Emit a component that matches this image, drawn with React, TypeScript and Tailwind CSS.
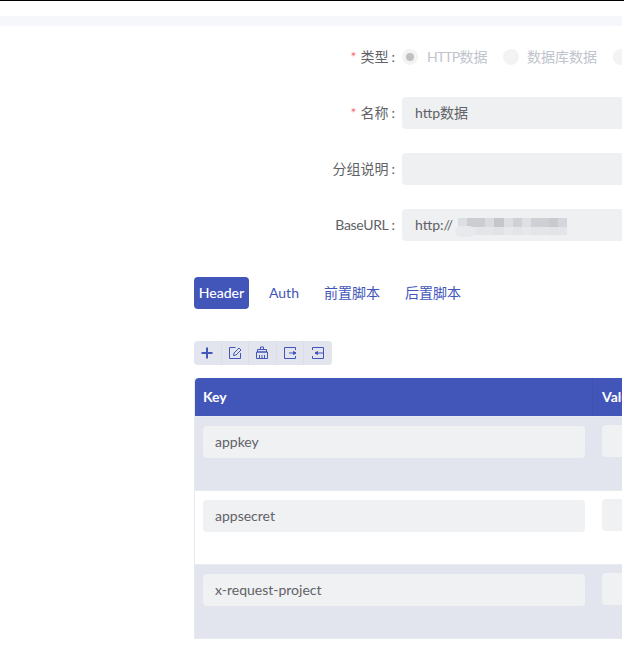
import React from "react";

const font = { fontFamily: "Lato, 'Noto Sans CJK SC', sans-serif" };

const mosaicTop = ["#dcdee2", "#cccdd1", "#cccdd1", "#dadbdf", "#c5c6ca", "#dcdee2", "#cfd1d5", "#dfe0e3", "#cfd0d5", "#cfd0d5", "#c8cacd", "#d3d6da"];
const mosaicBottom = ["#eaebee", "#e6e7ea", "#e3e5e8", "#e3e5e8", "#e0e2e5", "#e6e8ea", "#e3e5e8", "#e6e8ea", "#e3e5e8", "#e3e5e8", "#e1e3e6", "#e3e5e8"];

function FormRow({ label, required, children }: { label: React.ReactNode; required?: boolean; children: React.ReactNode }) {
  return (
    <div className="flex h-8 items-center">
      <div className="w-[402px] shrink-0 pr-[7px] text-right text-sm text-[#606266]">
        {required && <span className="mr-1 text-[#f56c6c]">*</span>}
        {label}
        <span className="ml-[3px]">:</span>
      </div>
      {children}
    </div>
  );
}

function Radio({ label, checked, width }: { label?: React.ReactNode; checked?: boolean; width: string }) {
  return (
    <div className={`flex items-center ${width}`}>
      <span className="flex h-4 w-4 shrink-0 items-center justify-center rounded-full bg-[#f3f3f3]">
        {checked && <span className="h-2 w-2 rounded-full bg-[#c0c0c0]"></span>}
      </span>
      {label && <span className="ml-[8px] text-sm text-[#c0c4cc]">{label}</span>}
    </div>
  );
}

function ToolIcon({ children, last }: { children: React.ReactNode; last?: boolean }) {
  return (
    <div className={`flex h-6 w-[27.6px] items-center justify-center ${last ? "" : "border-r border-[#dcdfea]"}`}>
      <svg width="14" height="14" viewBox="0 0 14 14" fill="none" stroke="#4255b8" strokeWidth="1">
        {children}
      </svg>
    </div>
  );
}

function TableRow({ name, striped }: { name: string; striped?: boolean }) {
  return (
    <div className={`flex h-[74px] border-t ${striped ? "border-[#e8eaf0] bg-[#e2e5ee] first:border-[#e2e5ee]" : "border-[#e8eaf0] bg-white"}`}>
      <div className="w-[398px] shrink-0 pl-2 pt-[9px]">
        <div className="flex h-8 w-[382px] items-center rounded bg-[#f0f1f3] px-3 text-sm text-[#606266]">{name}</div>
      </div>
      <div className="flex-1 pl-[9px] pt-2">
        <div className="h-8 rounded-l bg-[#f0f1f3]"></div>
      </div>
    </div>
  );
}

export default function App() {
  return (
    <div className="h-[648px] w-[624px] overflow-hidden bg-white" style={font}>
      <div className="h-px bg-black"></div>
      <div className="mt-[15px] h-[10px] w-[622px] bg-[#f5f7fa]"></div>

      <div className="w-[622px]">
        {/* Form */}
        <div className="mt-[15px] flex flex-col gap-6">
          <FormRow label="类型" required>
            <div className="flex overflow-hidden">
              <Radio
                label={
                  <>
                    <span className="ml-px tracking-[-0.8px]">HTTP</span>数据
                  </>
                }
                checked
                width="w-[101px]"
              />
              <Radio label="数据库数据" width="w-[110px]" />
              <Radio width="w-[9px]" />
            </div>
          </FormRow>
          <FormRow label="名称" required>
            <div className="flex h-8 flex-1 items-center rounded-l bg-[#eff0f2] pl-[13px] text-sm text-[#606266]">http数据</div>
          </FormRow>
          <FormRow label="分组说明">
            <div className="h-8 flex-1 rounded-l bg-[#eff0f2]"></div>
          </FormRow>
          <FormRow label={<span className="tracking-[-0.3px]">BaseURL</span>}>
            <div className="flex h-8 flex-1 items-center rounded-l bg-[#eff0f2] pl-[13px] text-sm text-[#606266]">
              http://
              <div className="relative ml-[5px] mt-[3px] flex flex-col">
                <div className="flex">
                  {mosaicTop.map((c, i) => (
                    <span key={i} className="h-[9px] w-[9.08px]" style={{ background: c }}></span>
                  ))}
                </div>
                <div className="flex">
                  {mosaicBottom.map((c, i) => (
                    <span key={i} className="h-2 w-[9.08px]" style={{ background: c }}></span>
                  ))}
                </div>
                {/* smudge at the left end of the blur */}
                <span className="absolute -left-[3px] top-[8px] h-[11px] w-[20px] rounded-full bg-[#e8e9ec]"></span>
              </div>
            </div>
          </FormRow>
        </div>

        {/* Tabs */}
        <div className="ml-[194px] mt-9 flex h-8 items-center text-sm text-[#4255b8]">
          <div className="flex h-8 w-[55px] items-center justify-center rounded bg-[#4255b8] font-medium text-white">Header</div>
          <span className="ml-5">Auth</span>
          <span className="ml-[25px]">前置脚本</span>
          <span className="ml-[25px]">后置脚本</span>
        </div>

        {/* Toolbar */}
        <div className="ml-[194px] mt-8 flex h-6 w-[138px] overflow-hidden rounded bg-[#e2e5ee]">
          <ToolIcon>
            <path d="M7 1.5v11M1.5 7h11" strokeWidth="2" />
          </ToolIcon>
          <ToolIcon>
            <path d="M7.5 1.5H1.5v11h11V7" />
            <path d="M5.5 9.5l.5-2.5 5-5 2 2-5 5z" />
          </ToolIcon>
          <ToolIcon>
            <path d="M5.5 3.5V1h3v2.5" />
            <path d="M2.5 3.5h9V6h-9zM1.5 6h11v6.5h-11zM4.5 9v3.5M7 9v3.5M9.5 9v3.5" />
          </ToolIcon>
          <ToolIcon>
            <path d="M12.5 4V1.5h-11v11h11V10" />
            <path d="M6 7h7" />
            <path d="M10.5 5.5L13 7l-2.5 1.5z" fill="#4255b8" />
          </ToolIcon>
          <ToolIcon last>
            <path d="M1.5 4V1.5h11v11h-11V10" />
            <path d="M4 7h8" />
            <path d="M6.5 5.5L4 7l2.5 1.5z" fill="#4255b8" />
          </ToolIcon>
        </div>

        {/* Table */}
        <div className="ml-[194px] mt-[13px] overflow-hidden border-b border-l border-[#e8eaf0]">
          <div className="flex h-[38px] items-center overflow-hidden rounded-tl bg-[#4255b8] text-sm font-bold text-white">
            <div className="flex h-[38px] w-[398px] shrink-0 items-center border-r border-[#3f50ae] pl-2">Key</div>
            <div className="flex-1 overflow-hidden whitespace-nowrap pl-[9px]">Value</div>
          </div>
          <TableRow name="appkey" striped />
          <TableRow name="appsecret" />
          <TableRow name="x-request-project" striped />
        </div>
      </div>
    </div>
  );
}
